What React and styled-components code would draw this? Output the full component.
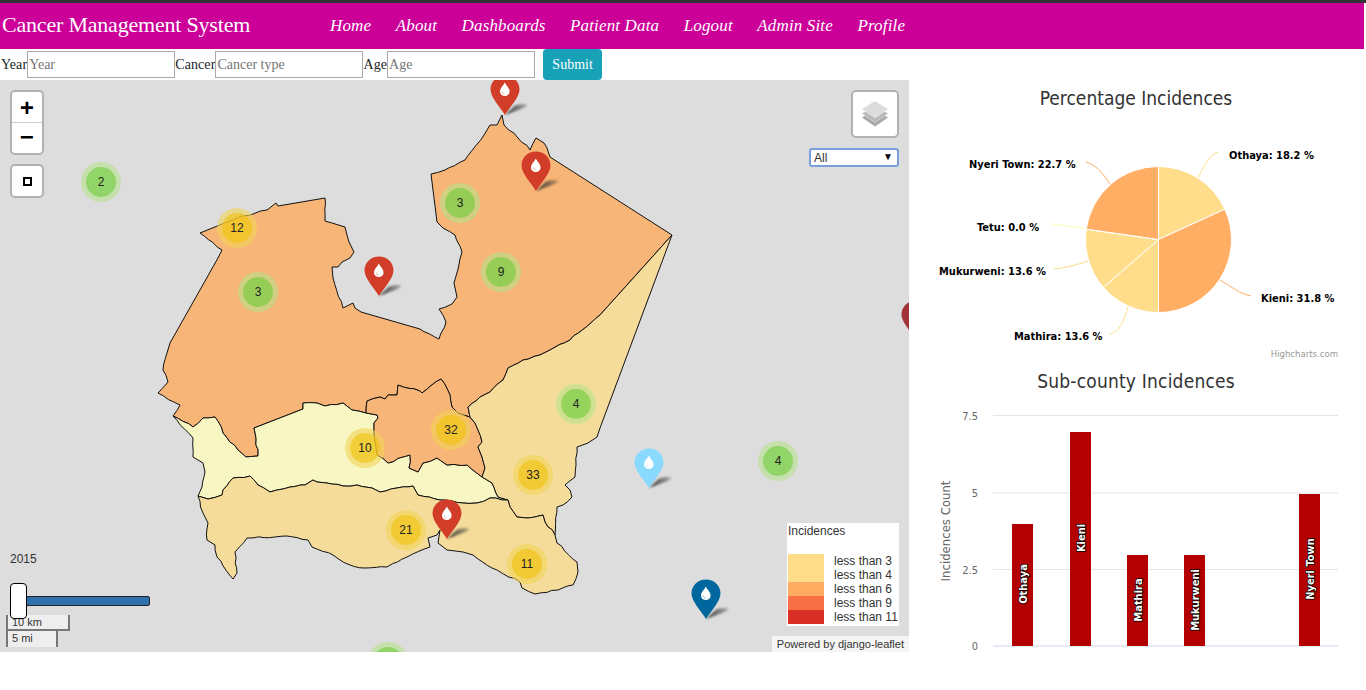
import React from 'react';
import styled, { createGlobalStyle } from 'styled-components';

const GlobalStyle = createGlobalStyle`
  html, body {
    margin: 0;
    padding: 0;
    background: #fff;
    font-family: 'Liberation Serif', 'Times New Roman', serif;
    font-size: 14px;
    color: #212529;
  }
`;

const CHART_FONT = "'DejaVu Sans Condensed', 'DejaVu Sans', sans-serif";
const MAP_FONT = "'Liberation Sans', Arial, sans-serif";

const navLinks = ['Home', 'About', 'Dashboards', 'Patient Data', 'Logout', 'Admin Site', 'Profile'];

const Page = styled.div`
  width: 1366px;
  height: 690px;
  overflow: hidden;
`;

const TopEdge = styled.div`
  height: 3px;
  background: #333;
`;

const Navbar = styled.nav`
  display: flex;
  align-items: center;
  height: 46px;
  margin-right: 2px;
  background: #cc0099;
  color: #fff;
`;

const Brand = styled.a`
  width: 330px;
  padding: 0 0 3px 2px;
  box-sizing: border-box;
  font-size: 22px;
  letter-spacing: -0.2px;
  line-height: 40px;
`;

const NavList = styled.div`
  display: flex;
  gap: 24.5px;
`;

const NavLink = styled.a`
  font-size: 17px;
  font-style: italic;
  letter-spacing: 0.15px;
  color: #fff;
`;

const FilterForm = styled.form`
  display: flex;
  align-items: center;
  height: 31px;
  padding-left: 1px;
`;

const FieldLabel = styled.label`
  font-size: 14px;
  letter-spacing: 0.1px;
  color: #212529;
`;

const FieldInput = styled.input`
  width: 148px;
  height: 27px;
  padding: 1px 1px;
  box-sizing: border-box;
  border: 1px solid #a9a9a9;
  border-radius: 0;
  outline: none;
  background: #fff;
  font-family: inherit;
  font-size: 14px;
  &::placeholder {
    color: #757575;
  }
`;

const SubmitButton = styled.button`
  width: 59px;
  height: 31px;
  margin-left: 8px;
  padding: 0;
  border: none;
  border-radius: 4px;
  background: #17a2b8;
  color: #fff;
  font-family: inherit;
  font-size: 14px;
  font-weight: 400;
`;

const Content = styled.div`
  display: flex;
  height: 572px;
`;

/* map */

const MapBox = styled.div`
  position: relative;
  flex: 0 0 909px;
  height: 572px;
  overflow: hidden;
  background: #ddd;
  font-family: ${MAP_FONT};
  font-size: 12px;
  color: #333;
`;

const Regions = styled.svg`
  position: absolute;
  left: 0;
  top: 0;
`;

const Region = styled.polygon`
  fill: ${p => p.$fill};
  stroke: #111;
  stroke-width: 1;
  stroke-linejoin: round;
`;

const ClusterRing = styled.div`
  position: absolute;
  left: ${p => p.$x - 20}px;
  top: ${p => p.$y - 100}px;
  display: flex;
  align-items: center;
  justify-content: center;
  width: 40px;
  height: 40px;
  border-radius: 50%;
  background: ${p => (p.$big ? 'rgba(241, 211, 87, 0.6)' : 'rgba(181, 226, 140, 0.6)')};
`;

const ClusterCore = styled.div`
  width: 30px;
  height: 30px;
  border-radius: 50%;
  background: ${p => (p.$big ? 'rgba(240, 194, 12, 0.6)' : 'rgba(110, 204, 57, 0.6)')};
  font-size: 12px;
  line-height: 30px;
  text-align: center;
  color: #222;
`;

const PinSvg = styled.svg`
  position: absolute;
  left: ${p => p.$x - 15}px;
  top: ${p => p.$y - 120}px;
  overflow: visible;
`;

const ZoomBox = styled.div`
  position: absolute;
  left: 10px;
  top: 10px;
  width: 30px;
  border: 2px solid #b1b1b1;
  border-radius: 5px;
  background: #fff;
`;

const ZoomButton = styled.a`
  display: block;
  height: 30px;
  border-bottom: ${p => (p.$last ? 'none' : '1px solid #ccc')};
  font-family: 'Liberation Mono', monospace;
  font-size: 24px;
  font-weight: 700;
  line-height: ${p => (p.$last ? 32 : 35)}px;
  text-align: center;
  color: #000;
`;

const SquareButton = styled.a`
  position: absolute;
  left: 10px;
  top: 84px;
  display: flex;
  align-items: center;
  justify-content: center;
  width: 30px;
  height: 30px;
  border: 2px solid #b1b1b1;
  border-radius: 5px;
  background: #fff;
`;

const SquareIcon = styled.span`
  width: 5px;
  height: 5px;
  border: 2px solid #000;
`;

const LayersButton = styled.a`
  position: absolute;
  right: 10px;
  top: 10px;
  display: flex;
  align-items: center;
  justify-content: center;
  width: 44px;
  height: 44px;
  border: 2px solid #b1b1b1;
  border-radius: 5px;
  background: #fff;
`;

const SelectWrap = styled.div`
  position: absolute;
  right: 10px;
  top: 68px;
  width: 90px;
  height: 19px;
  &::after {
    content: '▼';
    position: absolute;
    right: 6px;
    top: 3px;
    font-size: 10px;
    line-height: 12px;
    color: #000;
    pointer-events: none;
  }
`;

const FilterSelect = styled.select`
  width: 100%;
  height: 100%;
  padding: 0 0 0 3px;
  box-sizing: border-box;
  appearance: none;
  border: 2px solid #7b9fdc;
  border-radius: 3px;
  background: #fff;
  font-family: ${MAP_FONT};
  font-size: 12px;
  color: #333;
`;

const YearText = styled.div`
  position: absolute;
  left: 10px;
  top: 472px;
  font-size: 12px;
  line-height: 14px;
  color: #333;
`;

const SliderTrack = styled.div`
  position: absolute;
  left: 18px;
  top: 516px;
  width: 132px;
  height: 10px;
  box-sizing: border-box;
  border: 1px solid #222;
  border-radius: 2px;
  background: #2f71ab;
`;

const SliderHandle = styled.div`
  position: absolute;
  left: 10px;
  top: 503px;
  width: 17px;
  height: 36px;
  box-sizing: border-box;
  border: 1px solid #000;
  border-radius: 4px;
  background: #fff;
  z-index: 2;
`;

const ScaleStack = styled.div`
  position: absolute;
  left: 6px;
  top: 535px;
  display: flex;
  flex-direction: column;
  align-items: flex-start;
`;

const ScaleBar = styled.div`
  width: ${p => p.$w}px;
  height: ${p => p.$h}px;
  padding-left: 4px;
  box-sizing: border-box;
  border: 2px solid #777;
  border-top: none;
  border-bottom: ${p => (p.$open ? 'none' : '2px solid #777')};
  background: rgba(255, 255, 255, 0.5);
  font-size: 11px;
  line-height: ${p => p.$h - 2}px;
  color: #333;
`;

const Legend = styled.div`
  position: absolute;
  left: 787px;
  top: 443px;
  width: 112px;
  height: 103px;
  padding: 1px;
  box-sizing: border-box;
  background: #fff;
`;

const LegendTitle = styled.div`
  height: 30px;
  font-size: 12px;
  line-height: 14px;
`;

const LegendRow = styled.div`
  display: flex;
  height: 14px;
  font-size: 12px;
  line-height: 14px;
  white-space: nowrap;
`;

const Swatch = styled.i`
  flex: 0 0 36px;
  margin-right: 10px;
  background: ${p => p.$color};
`;

const Attribution = styled.div`
  position: absolute;
  right: 0;
  bottom: 0;
  padding: 0 5px;
  background: rgba(255, 255, 255, 0.7);
  font-size: 11px;
  line-height: 16px;
  color: #333;
`;

/* charts */

const ChartColumn = styled.div`
  flex: 0 0 412px;
  min-width: 0;
  margin-left: 21px;
  font-family: ${CHART_FONT};
`;

const ChartTitle = styled.h2`
  height: ${p => p.$h}px;
  margin: 0;
  font-family: ${CHART_FONT};
  font-size: 19px;
  font-weight: 400;
  letter-spacing: ${p => p.$track}px;
  line-height: ${p => p.$h}px;
  text-align: center;
  color: #333;
`;

const ChartSvg = styled.svg`
  display: block;
  overflow: visible;
`;

const PieLabel = styled.text`
  font-family: ${CHART_FONT};
  font-size: 11px;
  font-weight: 700;
  fill: #000;
  paint-order: stroke;
  stroke: #fff;
  stroke-width: 1.5px;
`;

const Credit = styled.text`
  font-family: ${CHART_FONT};
  font-size: 9.5px;
  fill: #999;
`;

const AxisText = styled.text`
  font-family: ${CHART_FONT};
  font-size: ${p => p.$size}px;
  fill: #666;
`;

const BarLabel = styled.text`
  font-family: ${CHART_FONT};
  font-size: 11px;
  font-weight: 700;
  fill: #fff;
  paint-order: stroke;
  stroke: #000;
  stroke-width: 1.5px;
`;

const ORANGE = '#f7b577';
const PALE = '#f8f7c3';
const SAND = '#f6dc9a';

const mainRegion =
  '200,233 242,216 267,210 276,203 278,206 325,198 325,221 345,227 347,235 349,242 354,252 350,258 342,262 338,267 332,267 333,278 343,308 353,303 355,308 361,312 420,329 439,339 446,322 439,309 452,304 457,297 454,283 462,252 455,235 443,228 437,222 431,174 445,170 465,160 484,135 490,125 497,125 502,115 504,125 518,138 530,150 536,138 544,143 550,157 672,235 600,315 570,340 550,350 540,355 523,360 508,368 503,380 490,392 480,397 468,407 470,417 458,413 452,407 450,395 441,379 422,393 420,391 398,385 397,395 388,395 385,399 380,397 367,401 366,413 352,410 343,403 325,406 317,403 303,403 303,409 254,428 258,456 246,457 238,450 223,433 215,417 203,418 193,427 173,416 180,405 158,393 168,382 163,370 167,353 170,343 218,258 222,250';
const paleRegion =
  '173,416 193,427 203,418 215,417 223,433 238,450 246,457 258,456 254,428 303,409 303,403 317,403 325,406 343,403 352,410 366,413 377,415 378,418 374,423 374,433 377,455 388,463 410,455 409,468 418,472 423,463 437,458 447,465 467,465 482,477 492,483 498,497 508,500 490,498 477,503 463,503 440,500 418,495 413,486 397,488 380,492 372,488 357,485 343,486 327,483 317,482 313,480 305,485 290,487 270,492 258,485 250,476 233,478 223,490 222,495 208,499 198,496 202,487 205,472 203,463 193,457 193,438';
const centerRegion =
  '366,413 367,401 380,397 385,399 388,395 397,395 398,385 420,391 422,393 441,379 450,395 452,407 458,413 470,417 475,423 482,442 478,447 482,457 485,468 482,477 467,465 447,465 437,458 423,463 418,472 409,468 410,455 388,463 377,455 374,433 374,423 378,418 377,415';
const eastRegion =
  '672,235 600,315 570,340 550,350 540,355 523,360 508,368 503,380 490,392 480,397 468,407 470,417 475,423 482,442 478,447 482,457 485,468 482,477 492,483 498,497 508,500 510,507 517,517 527,518 543,515 545,522 555,535 557,507 563,505 572,497 570,490 565,485 575,477 577,447 588,443 597,437 600,428';
const southRegion =
  '198,496 208,499 222,495 223,490 233,478 250,476 258,485 270,492 290,487 305,485 313,480 317,482 327,483 343,486 357,485 372,488 380,492 397,488 413,486 418,495 440,500 463,503 477,503 490,498 508,500 510,507 517,517 527,518 543,515 545,522 555,535 557,543 577,562 578,572 573,585 558,590 535,594 522,588 520,582 492,568 473,555 463,552 447,550 438,543 440,530 437,535 428,538 430,547 407,557 387,567 365,568 350,565 333,555 312,547 308,540 287,536 247,538 235,552 237,573 233,579 217,557 215,545 207,540 208,523 203,513';

// the boundaries are hand traced, so short edges get a little wobble like the real geojson
const wobble = (x, y) => {
  const h = Math.sin(Math.round(x) * 12.9898 + Math.round(y) * 78.233) * 43758.5453;
  return (h - Math.floor(h) - 0.5) * 1.8;
};

const roughen = points => {
  const pts = points.split(' ').map(p => p.split(',').map(Number));
  const out = [];
  pts.forEach((a, i) => {
    const b = pts[(i + 1) % pts.length];
    const len = Math.hypot(b[0] - a[0], b[1] - a[1]);
    out.push(a.join(','));
    if (len < 12 || len > 45) return;
    const steps = Math.round(len / 6);
    for (let k = 1; k < steps; k++) {
      const x = a[0] + ((b[0] - a[0]) * k) / steps;
      const y = a[1] + ((b[1] - a[1]) * k) / steps;
      out.push(`${(x + wobble(x, y)).toFixed(1)},${(y + wobble(y, x)).toFixed(1)}`);
    }
  });
  return out.join(' ');
};

const clusters = [
  { x: 101, y: 182, n: 2 },
  { x: 237, y: 228, n: 12, big: true },
  { x: 258, y: 292, n: 3 },
  { x: 460, y: 203, n: 3 },
  { x: 501, y: 272, n: 9 },
  { x: 576, y: 404, n: 4 },
  { x: 451, y: 430, n: 32, big: true },
  { x: 365, y: 448, n: 10, big: true },
  { x: 533, y: 475, n: 33, big: true },
  { x: 778, y: 461, n: 4 },
  { x: 406, y: 530, n: 21, big: true },
  { x: 527, y: 564, n: 11, big: true },
  { x: 388, y: 662 },
];

const pins = [
  { x: 505, y: 115, color: '#d13d29' },
  { x: 536, y: 191, color: '#d13d29' },
  { x: 378.5, y: 296, color: '#d13d29' },
  { x: 447, y: 539, color: '#d13d29' },
  { x: 649, y: 488, color: '#8ad9ff' },
  { x: 706, y: 619, color: '#00679e' },
  { x: 916, y: 340, color: '#a23336' },
];

const legendRows = [
  { label: 'less than 3', color: '#ffdd88' },
  { label: 'less than 4', color: '#ffdd88' },
  { label: 'less than 6', color: '#feac62' },
  { label: 'less than 9', color: '#f86f45' },
  { label: 'less than 11', color: '#da2f25' },
];

const slices = [
  { value: 4, color: '#ffdd8a' },
  { value: 7, color: '#ffae63' },
  { value: 3, color: '#ffdd8a' },
  { value: 3, color: '#ffdd8a' },
  { value: 0, color: '#ffffb2' },
  { value: 5, color: '#ffae63' },
];

const pieLabels = [
  { text: 'Othaya: 18.2 %', x: 1229, y: 159, line: 'M1198 178C1206 162 1210 155 1218 152', color: '#ffdd8a' },
  { text: 'Kieni: 31.8 %', x: 1261, y: 302, line: 'M1220 280C1232 287 1240 294 1251 296', color: '#ffae63' },
  { text: 'Mathira: 13.6 %', x: 1014, y: 340, line: 'M1128 307C1124 320 1120 332 1110 334', color: '#ffdd8a' },
  { text: 'Mukurweni: 13.6 %', x: 939, y: 275, line: 'M1088 261C1076 265 1066 268 1054 269', color: '#ffdd8a' },
  { text: 'Tetu: 0.0 %', x: 977, y: 231, line: 'M1087 229C1075 227 1063 225 1051 224', color: '#ffffb2' },
  { text: 'Nyeri Town: 22.7 %', x: 969, y: 168, line: 'M1110 184C1102 172 1096 165 1086 162', color: '#ffae63' },
];

const bars = [
  { name: 'Othaya', x: 1012, top: 524, mid: 584 },
  { name: 'Kieni', x: 1070, top: 432, mid: 538 },
  { name: 'Mathira', x: 1127, top: 555, mid: 600 },
  { name: 'Mukurweni', x: 1184, top: 555, mid: 600 },
  { name: 'Nyeri Town', x: 1299, top: 494, mid: 569 },
];

const gridLines = [
  { label: '7.5', y: 415.5 },
  { label: '5', y: 493 },
  { label: '2.5', y: 569.5 },
  { label: '0', y: 646 },
];

const PIE_X = 1158.5;
const PIE_Y = 239.5;
const PIE_R = 73;

const piePaths = () => {
  const total = slices.reduce((sum, s) => sum + s.value, 0);
  let angle = 0;
  return slices.map(s => {
    const start = angle;
    angle += (s.value / total) * Math.PI * 2;
    const x1 = PIE_X + PIE_R * Math.sin(start);
    const y1 = PIE_Y - PIE_R * Math.cos(start);
    const x2 = PIE_X + PIE_R * Math.sin(angle);
    const y2 = PIE_Y - PIE_R * Math.cos(angle);
    const large = angle - start > Math.PI ? 1 : 0;
    return {
      color: s.color,
      d: `M${PIE_X} ${PIE_Y}L${x1} ${y1}A${PIE_R} ${PIE_R} 0 ${large} 1 ${x2} ${y2}Z`,
    };
  });
};

const Pin = ({ x, y, color }) => (
  <PinSvg $x={x} $y={y} width="40" height="41" viewBox="0 0 40 41">
    <defs>
      <filter id="pin-blur" x="-30%" y="-30%" width="160%" height="160%">
        <feGaussianBlur stdDeviation="1.2" />
      </filter>
      <linearGradient id="pin-shade" x1="0" x2="1" y1="0" y2="0">
        <stop offset="0" stopColor="#222" stopOpacity="0.9" />
        <stop offset="1" stopColor="#444" stopOpacity="0.35" />
      </linearGradient>
    </defs>
    <path d="M15 40L25 30.5C29 29 33 29 37 29.5C38 31 33 33.5 27 35.5Z" fill="url(#pin-shade)" filter="url(#pin-blur)" />
    <path
      d="M15 40C11 33 .5 22.5 .5 14.5C.5 6.5 7 .5 15 .5C23 .5 29.5 6.5 29.5 14.5C29.5 22.5 19 33 15 40Z"
      fill={color}
    />
    <path
      d="M14.8 7.5C13.5 10.5 10 13 10 16.5C10 19.3 12.1 21 14.8 21C17.5 21 19.6 19.3 19.6 16.5C19.6 13 16.1 10.5 14.8 7.5Z"
      fill="#fff"
    />
    <path d="M12.2 16.5C12.3 18 13.2 18.9 14.6 19" fill="none" stroke={color} strokeWidth="0.7" opacity="0.6" />
  </PinSvg>
);

const LayersIcon = () => (
  <svg width="26" height="26" viewBox="0 0 26 26">
    <path d="M13 9L26 16.5L13 25.5L0 16.5Z" fill="#a8a8a8" />
    <path d="M13 5L26 12.5L13 21.5L0 12.5Z" fill="#b8b8b8" stroke="#e8e8e8" strokeWidth="0.6" />
    <path d="M13 0L26 8L13 17L0 8Z" fill="#dcdcdc" stroke="#f0f0f0" strokeWidth="0.6" />
  </svg>
);

const App = () => (
  <Page>
    <GlobalStyle />
    <TopEdge />
    <Navbar>
      <Brand>Cancer Management System</Brand>
      <NavList>
        {navLinks.map(link => (
          <NavLink key={link}>{link}</NavLink>
        ))}
      </NavList>
    </Navbar>
    <FilterForm onSubmit={e => e.preventDefault()}>
      <FieldLabel>Year</FieldLabel>
      <FieldInput placeholder="Year" />
      <FieldLabel>Cancer</FieldLabel>
      <FieldInput placeholder="Cancer type" />
      <FieldLabel>Age</FieldLabel>
      <FieldInput placeholder="Age" />
      <SubmitButton type="submit">Submit</SubmitButton>
    </FilterForm>
    <Content>
      <MapBox>
        <Regions width="909" height="572" viewBox="0 80 909 572">
          <Region $fill={ORANGE} points={roughen(mainRegion)} />
          <Region $fill={PALE} points={roughen(paleRegion)} />
          <Region $fill={ORANGE} points={roughen(centerRegion)} />
          <Region $fill={SAND} points={roughen(eastRegion)} />
          <Region $fill={SAND} points={roughen(southRegion)} />
        </Regions>
        {clusters.map(c => (
          <ClusterRing key={`${c.x}-${c.y}`} $x={c.x} $y={c.y} $big={c.big}>
            <ClusterCore $big={c.big}>{c.n}</ClusterCore>
          </ClusterRing>
        ))}
        {pins.map(p => (
          <Pin key={`${p.x}-${p.y}`} x={p.x} y={p.y} color={p.color} />
        ))}
        <ZoomBox>
          <ZoomButton>+</ZoomButton>
          <ZoomButton $last>−</ZoomButton>
        </ZoomBox>
        <SquareButton>
          <SquareIcon />
        </SquareButton>
        <LayersButton>
          <LayersIcon />
        </LayersButton>
        <SelectWrap>
          <FilterSelect defaultValue="All">
            <option>All</option>
          </FilterSelect>
        </SelectWrap>
        <YearText>2015</YearText>
        <SliderTrack />
        <SliderHandle />
        <ScaleStack>
          <ScaleBar $w={64} $h={16}>10 km</ScaleBar>
          <ScaleBar $w={52} $h={16} $open>5 mi</ScaleBar>
        </ScaleStack>
        <Legend>
          <LegendTitle>Incidences</LegendTitle>
          {legendRows.map(row => (
            <LegendRow key={row.label}>
              <Swatch $color={row.color} />
              {row.label}
            </LegendRow>
          ))}
        </Legend>
        <Attribution>Powered by django-leaflet</Attribution>
      </MapBox>
      <ChartColumn>
        <ChartTitle $h={36} $track={0}>Percentage Incidences</ChartTitle>
        <ChartSvg width="430" height="249" viewBox="930 116 430 249">
          {pieLabels.map(l => (
            <path key={l.text} d={l.line} fill="none" stroke={l.color} strokeWidth="1" />
          ))}
          {piePaths().map((s, i) => (
            <path key={i} d={s.d} fill={s.color} stroke="#fff" strokeWidth="1" strokeLinejoin="round" />
          ))}
          {pieLabels.map(l => (
            <PieLabel key={l.text} x={l.x} y={l.y}>{l.text}</PieLabel>
          ))}
          <Credit x="1338" y="357" textAnchor="end">Highcharts.com</Credit>
        </ChartSvg>
        <ChartTitle $h={32} $track={0.2}>Sub-county Incidences</ChartTitle>
        <ChartSvg width="430" height="255" viewBox="930 397 430 255">
          {gridLines.map(g => (
            <g key={g.label}>
              <line x1="993" x2="1338" y1={g.y} y2={g.y} stroke={g.label === '0' ? '#ccd6eb' : '#e6e6e6'} />
              <AxisText $size={11} x="978" y={g.y + 4} textAnchor="end">{g.label}</AxisText>
            </g>
          ))}
          <AxisText $size={13} x="950" y="531" textAnchor="middle" transform="rotate(-90 950 531)">Incidences Count</AxisText>
          {bars.map(b => (
            <g key={b.name}>
              <rect x={b.x} y={b.top} width="21" height={646 - b.top} fill="#b30000" />
              <BarLabel
                x={b.x + 14.5}
                y={b.mid}
                textAnchor="middle"
                transform={`rotate(-90 ${b.x + 14.5} ${b.mid})`}
              >
                {b.name}
              </BarLabel>
            </g>
          ))}
        </ChartSvg>
      </ChartColumn>
    </Content>
  </Page>
);

export default App;
